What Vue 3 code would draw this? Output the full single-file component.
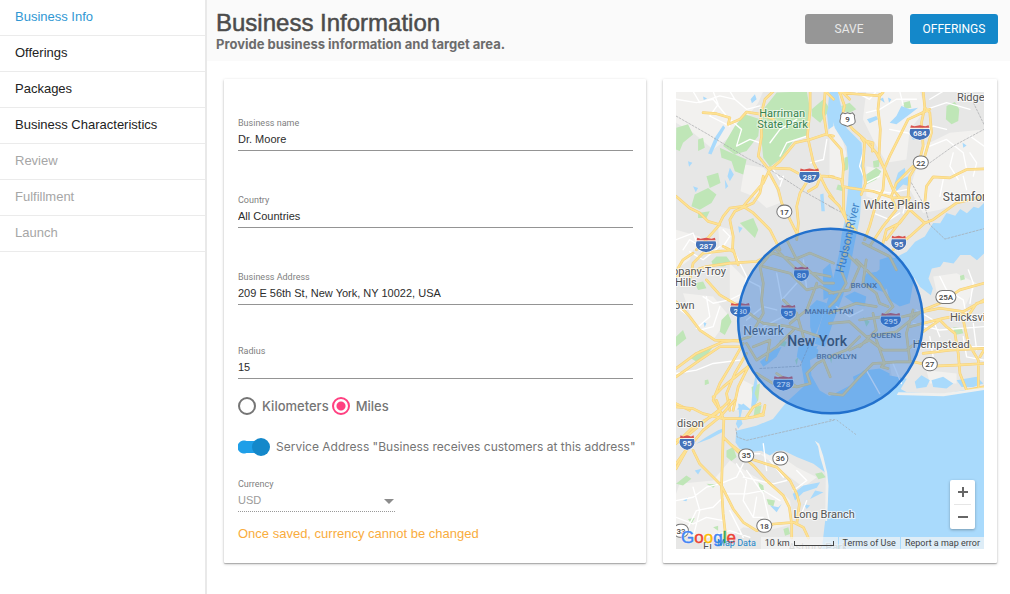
<script setup>
import { ref } from 'vue'

const steps = [
  { label: 'Business Info', state: 'current' },
  { label: 'Offerings', state: 'open' },
  { label: 'Packages', state: 'open' },
  { label: 'Business Characteristics', state: 'open' },
  { label: 'Review', state: 'locked' },
  { label: 'Fulfillment', state: 'locked' },
  { label: 'Launch', state: 'locked' },
]

const name = ref('Dr. Moore')
const country = ref('All Countries')
const address = ref('209 E 56th St, New York, NY 10022, USA')
const radius = ref('15')
const unit = ref('mi')
const serviceAddress = ref(true)

// Map sheets: each one covers a tile of the drawing and keeps its own origin.
const sheets = [
  {
    id: 'nw', origin: 'translate(-39 -36)',
    pale: 'M39 36H300L285 70 240 130 190 180 150 210 90 160 39 130ZM245 255L300 265 330 300 350 370 310 385 270 350 232 335ZM39 450L110 470 150 510H39ZM165 440L210 450 205 510H170Z',
    park: 'M300 90L340 40 430 36 440 90 430 170 390 185 350 240 320 262 300 235 293 170ZM215 140L245 105 290 120 285 170 250 215 215 225 180 200ZM40 145L75 135 90 165 60 190 50 215 39 210ZM105 180L120 175 125 205 105 215ZM170 205L215 225 250 240 240 285 215 275 205 245 175 235ZM130 290L165 280 172 310 140 325ZM95 345L135 325 160 345 145 370 110 390 85 380ZM105 400L140 395 130 415 105 415ZM230 430L270 415 285 450 275 475 250 450ZM445 90L480 60 500 90 470 130 445 110Z',
    lake: 'M180 138L186 145 165 180 145 225 135 222 155 175ZM262 60L275 45 280 60 266 72ZM120 52L132 58 122 62ZM75 245L88 250 78 262ZM200 265L212 285 200 305 193 290ZM470 345L480 342 484 395 474 395ZM185 300L195 320 187 328ZM225 440L238 445 228 460ZM290 230L297 240 290 248ZM90 320L105 325 98 338ZM500 60L510 50V140L495 150 490 100Z',
    minor: 'M39 60L100 70 150 60 190 110M90 36L110 70 170 50 215 60 250 90 290 80M150 36L165 75 140 110 200 140M215 60L200 36M200 120L235 150 220 200 260 180 290 190M320 190L350 150 400 120M350 230L370 190 430 170M490 180L480 240 440 250M330 270L350 300 360 290 350 320M39 480L90 460 110 510M60 510L80 480 130 510M180 450L200 470 180 500',
    major: 'M330 36L305 60 292 110 295 170 285 230 318 272 300 310 265 350 240 380 200 385 180 410 165 440 130 480 100 510M120 100L160 103 200 115 195 135 230 120 250 98 295 105 330 120M318 272L350 245 395 190 440 180 485 165 510 170M318 265L380 268 420 290 480 290 510 292M440 36L440 90 432 170 450 250 470 290 490 330 510 360M435 300L410 340 400 380 405 430 400 480M470 295L460 320 435 335M318 280L345 330 355 370 400 460M39 350L80 385 110 400 135 425 170 435M240 380L270 400 320 450 350 510M300 290L290 340 270 370 215 395 200 420 210 470 208 510M485 36L480 100 490 165M490 40L510 60',
    rail: 'M39 110L135 165 250 235 320 270 420 335 510 385',
  },
  {
    id: 'ne', origin: 'translate(459 -36)',
    pale: 'M110 36H270L290 90 240 150 230 240 170 250 130 180 100 120ZM280 200L360 160 462 150V340L330 390 280 400 240 330ZM110 260L160 270 200 330 190 380 110 350ZM0 120L30 150 50 220 45 300 0 290Z',
    park: 'M350 80L375 68 388 90 385 125 365 135 348 120ZM35 80L60 70 80 90 60 100 38 95ZM220 70L240 65 245 85 225 88ZM45 235L58 230 55 270 42 275ZM110 285L140 265 155 275 140 300 110 315ZM130 245L150 240 148 262 132 265ZM25 315L45 320 40 335 20 330Z',
    lake: 'M112 120L140 110 145 120 120 132ZM175 55L185 60 178 70ZM215 80L240 90 265 85 240 105 200 135 180 130 200 110ZM195 310L205 280 225 265 228 280 215 300 235 290 240 320 220 315 200 335ZM398 190L410 198 400 205ZM245 175L258 178 250 182ZM150 60L160 55 165 70Z',
    minor: 'M110 100L150 90 200 60 260 60M80 40L120 60 140 36M180 150L230 160 270 170 310 140 350 150M300 200L350 180 400 220 410 270 380 290M370 220L360 260 385 300M420 220L440 250 430 290M290 90L350 70 420 90M110 180L90 260 110 310 150 290M120 330L180 340 230 330M240 330L220 400M340 300L330 350M400 290L410 330M420 170L462 200M210 36L220 75M300 60L340 36M130 400L180 420 210 400',
    major: 'M30 36L45 80 38 110 70 150 110 185 140 220 165 270 190 330 240 390 285 430M60 60L40 40M30 40L90 45 150 50 160 40M150 45L145 90 152 150 148 230 165 270 160 330 140 370 120 440 105 480M95 175L105 190 100 260 108 310 95 345M110 185L130 190 128 215M280 36L285 85 275 130 280 200 270 240 240 290 235 350 240 390 200 440 170 480M300 90L235 120 210 170 180 230 165 265M285 85L300 100 305 160 285 230M250 260L200 310 185 350 200 390 160 440 120 500M0 170L35 210 42 260 38 320 60 325 130 335 190 355 240 355M0 290L35 300 42 330 42 390 60 460 50 510M0 350L30 380 50 420 80 455M462 268L410 270 360 295 310 292 290 320 285 370M240 390L210 430 170 450 160 490M462 350L380 370 310 420 285 430 240 470 190 510',
    rail: 'M300 250L370 200 462 150M245 310L285 380 300 435 345 478 462 447M430 70L462 135M0 380L60 410',
  },
  {
    id: 'w', origin: 'translate(-39 444)',
    pale: 'M39 0H100L80 60 39 90ZM60 160L150 170 200 230 150 300 90 250ZM240 420L280 440 260 510H200ZM200 70L250 120 240 180 200 190Z',
    park: 'M145 65L160 50 190 50 205 70 180 80 150 78ZM95 130L120 125 130 145 105 150ZM175 240L195 220 205 245 185 285 170 275ZM39 290L60 270 70 295 39 320ZM85 355L110 330 150 320 135 340 100 365ZM125 420L135 418 138 430 125 435ZM265 440L290 430 285 480 270 500ZM395 360L405 350 400 375ZM350 300L370 305 365 320 345 315Z',
    lake: 'M120 245L130 250 125 262ZM440 200L460 180 490 190 470 250 450 300 440 260ZM330 330L355 320 340 350 315 370 300 380 290 365ZM405 320L440 310 465 330 460 350 420 370 400 350ZM478 90L500 70 510 120 500 170 480 180ZM220 508L240 490 265 510ZM278 400L282 430 274 460 282 480 270 505 264 498 268 450Z',
    minor: 'M210 30L250 110 240 160 200 180 150 190 120 170M39 200L80 230 110 270 150 260 170 200M39 400L100 390 150 370 230 360M80 36L120 60 170 20M250 120L290 140 300 200M340 100L355 180 400 130M130 170L140 230 100 265M420 60L430 150M250 240L300 200 340 210M300 260L360 230',
    major: 'M39 185L80 230 110 270 155 300 230 303M39 385L100 340 180 305 230 300 260 290 300 220 295 180 300 130 290 80 340 20M39 410L110 360 170 320 235 320M39 110L130 80 200 70 280 65 330 40 390 60 440 40 510 70M80 120L90 70 120 40 210 30 225 75M130 120L170 165 230 200 300 250 380 260 470 290M39 95L60 60 90 40M180 20L210 35M240 310L200 380 170 430 150 480 170 510M250 340L215 400 190 460 200 510M255 380L225 440 210 510M260 375L180 440 150 470M39 490L80 510M300 80L380 100 430 150 470 140 510 160M340 30L400 90 500 110M370 0L400 60 480 130 510 130M390 270L340 320 280 360 250 310M270 320L320 300 310 360M340 400L400 440 440 430 430 400 460 370 480 360 500 410M420 290L400 220 360 180M280 400L330 430 400 440M460 130L430 210 380 250',
    rail: 'M290 385L410 378 435 320',
  },
  {
    id: 'e', origin: 'translate(459 444)',
    pale: 'M310 110L380 100 440 130 400 210 330 200ZM180 370L240 370 210 440 190 430ZM290 390L380 400 380 430 300 430Z',
    park: 'M390 108L402 105 405 118 392 122ZM370 262L395 265 400 280 375 285ZM150 80L170 70 175 110 155 120ZM100 230L120 245 110 260ZM0 350L10 345 5 370ZM380 465L462 450 430 462 395 474ZM40 60L60 50 55 80Z',
    lake: 'M150 60L180 50 235 70 255 100 240 190 210 200 180 180 170 140 150 110ZM45 170L75 155 110 170 105 200 80 195ZM70 410L110 390 150 385 180 400 175 440 130 455 80 450ZM255 425L275 405 300 420 290 440 260 445ZM305 420L340 410 370 430 350 445 310 440ZM380 420L410 415 440 410 460 430 430 440 395 440Z',
    minor: 'M330 110L350 150 400 180 410 230M420 190L430 130 415 90M250 250L330 270 462 260M260 210L310 240 330 290M300 290L310 350M400 290L410 350 462 360M430 250L440 330M190 370L215 430M280 320L462 320M110 390L150 460M20 200L60 230 100 210',
    major: 'M0 460L40 465 90 410 130 370 200 365 250 365 310 378 380 375 462 370M0 250L60 245 110 290 200 275 280 210 330 190 390 150 462 130M180 240L280 215 330 205 400 215 462 180M240 260L340 235 420 220 440 190 462 185M280 275L330 240 350 260 375 280 385 340 390 400 410 450 462 440M280 340L360 330 462 325M400 240L415 310 445 360 445 440M60 0L30 80 50 130 20 180 0 200M80 60L150 130 190 200 160 230 90 240M50 40L90 80 60 150 0 160M0 220L80 190 140 200M110 60L100 130 140 160 150 190 175 200M60 330L120 300 160 330 230 330 270 300M90 320L140 270 130 220M140 300L165 370 155 380 175 385M0 350L50 330 90 290M250 210L230 280 240 360M100 10L180 50 200 90M462 330L450 350',
    rail: '',
  },
  {
    id: 'sw', origin: 'translate(-39 924)',
    pale: 'M50 250L150 240 200 180 260 220 350 270 380 300 390 370 310 390 240 380 200 410H39V280ZM290 160L350 165 400 200 460 230 420 260 380 230Z',
    park: 'M39 250L70 225 85 235 60 255ZM130 250L160 252 150 262ZM190 150L210 140 220 170 205 182 190 170ZM285 245L300 255 303 275 290 268ZM310 295L335 300 330 318 315 312ZM75 355L95 352 85 370ZM455 220L475 215 487 230 465 236ZM275 20L295 15 290 40 270 55ZM150 380L165 375 165 390ZM360 385L375 380 380 400 365 405Z',
    lake: 'M130 110L165 90 178 85 178 95 140 115 100 130ZM225 10L240 15 232 50 238 70 225 85 218 70 228 45ZM388 280L420 255 470 245 460 262 420 275 395 300ZM455 270L480 275 440 295ZM320 315L345 320 355 310 340 335ZM420 310L440 315 430 325ZM95 210L115 205 105 222ZM60 300L75 290 70 302Z',
    minor: 'M39 300L90 290 130 260 170 250 220 230 240 190M60 410L100 330 150 320 180 290M39 350L90 370 130 350 180 360M90 260L110 330 90 410M220 190L250 240 240 300 270 350M250 210L300 280 320 370M240 230L330 250 370 240M190 280L250 280 300 270 350 300M280 290L270 350 300 350M200 330L240 410M400 210L430 240 390 270M320 180L360 230M300 130L310 210M130 410L200 390 260 410M410 350L430 300M260 160L290 160',
    major: 'M39 20L90 25 120 40 180 55 240 55 300 45M160 0L182 60 180 110 175 260 180 340 188 410M90 150L110 190 150 230 175 255 210 325 240 365 280 390 330 370 390 365 420 380 435 412M180 110L220 150 270 195 310 240 360 285 378 320 385 370 385 412M200 130L260 175 340 200 380 240 400 280 408 310 400 370M39 130L90 80 160 40 200 0M39 205L70 150 120 90 170 50 215 0M39 190L75 140M39 120L80 100 140 50 180 20M250 50L270 20 290 10M270 50L300 40 305 15',
    rail: 'M218 85L222 110 250 120 510 60',
  },
]

const interstates = [
  { n: '684', x: 243, y: 41 }, { n: '287', x: 133, y: 84 }, { n: '287', x: 30, y: 153 },
  { n: '95', x: 222, y: 151 }, { n: '80', x: 125, y: 182 }, { n: '95', x: 112, y: 220 },
  { n: '280', x: 64, y: 218 }, { n: '295', x: 214, y: 228 }, { n: '278', x: 107, y: 291 },
  { n: '95', x: 11, y: 350 },
]
const routes = [
  { n: '17', x: 108, y: 120 }, { n: '22', x: 244, y: 71 }, { n: '25A', x: 269, y: 205 },
  { n: '27', x: 253, y: 272 }, { n: '35', x: 70, y: 363 }, { n: '36', x: 104, y: 366 },
  { n: '18', x: 88, y: 433 }, { n: '33', x: 5, y: 438 },
]
const places = [
  { t: 'Ridge', x: 280, y: 10, c: 'town' }, { t: 'Stamfor', x: 266, y: 109, c: 'town big' },
  { t: 'White Plains', x: 187, y: 117, c: 'town big' }, { t: 'opany-Troy', x: -4, y: 183, c: 'town' },
  { t: 'Hills', x: -1, y: 194, c: 'town' }, { t: 'own', x: -2, y: 217, c: 'town' },
  { t: 'Newark', x: 67, y: 243, c: 'town big' }, { t: 'New York', x: 111, y: 254, c: 'city' },
  { t: 'Hicksvi', x: 273, y: 229, c: 'town' }, { t: 'Hempstead', x: 236, y: 256, c: 'town' },
  { t: 'MANHATTAN', x: 128, y: 222, c: 'district' }, { t: 'BRONX', x: 174, y: 196, c: 'district' },
  { t: 'QUEENS', x: 194, y: 246, c: 'district' }, { t: 'BROOKLYN', x: 140, y: 267, c: 'district' },
  { t: 'dison', x: 1, y: 335, c: 'town' }, { t: 'Long Branch', x: 117, y: 425, c: 'town' },
  { t: 'Harriman', x: 83, y: 26, c: 'green' }, { t: 'State Park', x: 81, y: 37, c: 'green' },
  { t: 'Fi', x: 27, y: 457, c: 'town' }, { t: 'Asbury Park', x: 112, y: 458, c: 'town faint' },
]
</script>

<template>
  <div class="page">
    <nav class="steps" aria-label="Setup steps">
      <a
        v-for="s in steps"
        :key="s.label"
        href="#"
        :class="['step', s.state]"
        :aria-current="s.state === 'current' ? 'step' : null"
        :aria-disabled="s.state === 'locked' ? 'true' : null"
      >{{ s.label }}</a>
    </nav>

    <main class="main">
      <header class="head">
        <div class="titles">
          <h1>Business Information</h1>
          <p>Provide business information and target area.</p>
        </div>
        <div class="actions">
          <button type="button" class="btn save">SAVE</button>
          <button type="button" class="btn next">OFFERINGS</button>
        </div>
      </header>

      <div class="content">
        <form class="card form" @submit.prevent>
          <div class="fields">
            <div class="field">
              <label for="name">Business name</label>
              <input id="name" v-model="name" type="text">
            </div>
            <div class="field">
              <label for="country">Country</label>
              <input id="country" v-model="country" type="text">
            </div>
            <div class="field">
              <label for="address">Business Address</label>
              <input id="address" v-model="address" type="text">
            </div>
          </div>
          <div class="field radius">
            <label for="radius">Radius</label>
            <input id="radius" v-model="radius" type="text">
          </div>

          <div class="units" role="radiogroup" aria-label="Radius unit">
            <label class="unit"><input v-model="unit" type="radio" name="unit" value="km">Kilometers</label>
            <label class="unit"><input v-model="unit" type="radio" name="unit" value="mi">Miles</label>
          </div>

          <label class="toggle">
            <input v-model="serviceAddress" type="checkbox" role="switch">
            <span>Service Address "Business receives customers at this address"</span>
          </label>

          <div class="field currency">
            <label for="currency">Currency</label>
            <div class="pick">
              <select id="currency" disabled>
                <option>USD</option>
              </select>
              <svg width="10" height="5" viewBox="0 0 10 5" aria-hidden="true"><path d="M0 0H10L5 5Z" fill="#8c8c8c" /></svg>
            </div>
          </div>
          <p class="note">Once saved, currency cannot be changed</p>
        </form>

        <section class="card mapcard" aria-label="Target area">
          <div class="map">
            <svg class="canvas" viewBox="0 0 307 457" preserveAspectRatio="xMidYMid slice" role="img" aria-label="Map of New York with a 15 mile radius">
              <defs>
                <path id="interstate" d="M-7 -3.5C-8 0 -7.500 3 -5 5 -3 6.500 -1.500 7 0 7.500 1.500 7 3 6.500 5 5 7.500 3 8 0 7 -3.500Z" />
              </defs>
              <rect width="307" height="457" fill="#e7e7e6" />
              <g transform="scale(.33333)">
                <g v-for="s in sheets" :key="s.id" :transform="s.origin">
                  <path :d="s.pale" fill="#f2f1ef" />
                  <path :d="s.park" fill="#bfe6b7" />
                </g>
                <g fill="#a9dafc">
                  <path d="M459 0L455 40 475 110 510 165 517 235 513 305 505 385 495 430 489 480 475 540 455 620 430 700 415 755 445 765 470 690 500 610 520 530 535 450 550 380 555 300 560 230 555 155 510 110 490 30 484 0Z" />
                  <path d="M921 334L905 350 890 345 870 365 850 352 835 372 809 364 790 395 769 394 744 434 715 450 690 480 650 500 600 540 570 545 555 570 590 590 620 600 640 580 690 560 705 545 730 585 762 610 768 590 755 560 765 530 790 525 800 510 830 515 850 490 880 490 900 505 921 485Z" />
                  <path d="M180 1015L178 1050 190 1068 221 1079 255 1075 281 1089 300 1076 321 1074 361 1094 411 1114 451 1144 453 1224 446 1284 436 1371H921V885L870 892 800 905 690 900 672 890 690 860 640 850 560 835 520 880 459 912 430 895 405 850 400 800 425 760 385 770 375 820 385 880 330 930 290 980 240 1000Z" />
                </g>
                <g v-for="s in sheets" :key="s.id" :transform="s.origin" fill="none" stroke-linejoin="round" stroke-linecap="round">
                  <path :d="s.lake" fill="#a9dafc" />
                  <path :d="s.minor" stroke="#fff" stroke-width="4" />
                  <path :d="s.rail" stroke="#a5a7aa" stroke-width="2" stroke-dasharray="6 5" />
                  <path :d="s.major" stroke="#f6cf78" stroke-width="8" />
                  <path :d="s.major" stroke="#fde293" stroke-width="5" />
                </g>
                <path d="M415 1045L428 1054 440 1090 452 1140 456 1180 452 1285 446 1284 448 1150 430 1090 425 1062Z" fill="#f0f0ee" />
                <path d="M665 900L800 903 921 886V893L800 912 660 908Z" fill="#f0f0ee" />
                <path d="M459 982L479 982 540 1028" fill="none" stroke="#a5a7aa" stroke-width="2" stroke-dasharray="6 5" />
              </g>

              <text v-for="p in places" :key="p.t" :class="p.c" :x="p.x" :y="p.y">{{ p.t }}</text>
              <text class="river" text-anchor="middle" transform="translate(175 147) rotate(-77)">Hudson River</text>

              <g v-for="(s, i) in interstates" :key="i" :transform="`translate(${s.x} ${s.y})`">
                <g :transform="s.n.length > 2 ? 'scale(1.35 1)' : ''">
                  <use href="#interstate" fill="#fff" stroke="#fff" stroke-width="1" />
                  <use href="#interstate" fill="#4472b8" />
                  <path d="M-7 -4.500L-6.500 -7 -4 -6 0 -7 4 -6 6.500 -7 7 -4.500Z" fill="#d9534f" />
                </g>
                <text class="shield light" y="4">{{ s.n }}</text>
              </g>
              <g v-for="r in routes" :key="r.n" :transform="`translate(${r.x} ${r.y})`">
                <rect v-if="r.n.length > 2" x="-10" y="-6.500" width="20" height="13" rx="6.500" class="oval" />
                <rect v-else x="-7.500" y="-6.500" width="15" height="13" rx="6.500" class="oval" />
                <text class="shield" y="3">{{ r.n }}</text>
              </g>
              <g transform="translate(171 28)">
                <path class="oval" d="M-7 -4L-5 -6.500 -2.500 -5.500 0 -6.500 2.500 -5.500 5 -6.500 7 -4C6 -2 8 0 7.500 3 6 6 3 5 0 7 -3 5 -6 6 -7.500 3 -8 0 -6 -2 -7 -4Z" />
                <text class="shield" y="3">9</text>
              </g>

              <circle cx="154" cy="229" r="92" fill="#2070d8" fill-opacity=".4" stroke="#2271cd" stroke-width="2.500" />
            </svg>

            <div class="google" aria-label="Google">
              <span class="b">G</span><span class="r">o</span><span class="y">o</span><span class="b">g</span><span class="g">l</span><span class="r">e</span>
            </div>
            <div class="zoom">
              <button type="button" aria-label="Zoom in"><svg width="10" height="10" viewBox="0 0 10 10"><path d="M5 0V10M0 5H10" stroke="#666" stroke-width="2" /></svg></button>
              <button type="button" aria-label="Zoom out"><svg width="10" height="10" viewBox="0 0 10 10"><path d="M0 5H10" stroke="#666" stroke-width="2" /></svg></button>
            </div>
            <div class="credits">
              <a href="#" class="data">Map Data</a>
              <span class="scale">10 km<i></i></span>
              <a href="#">Terms of Use</a>
              <a href="#">Report a map error</a>
            </div>
          </div>
        </section>
      </div>
    </main>
  </div>
</template>

<style>
body {
  background: #fff;
}
</style>

<style scoped>
.page {
  display: flex;
  min-height: 100vh;
  background: #fff;
  font-family: "Liberation Sans", Arial, sans-serif;
  box-sizing: border-box;
}
.page * {
  box-sizing: border-box;
}
.steps {
  flex: 0 0 207px;
  border-right: 2px solid #e9e9e9;
}
.step {
  display: block;
  height: 36px;
  padding: 0 15px;
  border-bottom: 1px solid #ebebeb;
  font-size: 13px;
  line-height: 34px;
  color: #222;
  text-decoration: none;
}
.step.current {
  color: #3097d3;
}
.step.locked {
  color: #a6a6a6;
}
.main {
  flex: 1;
  min-width: 0;
}
.head {
  display: flex;
  justify-content: space-between;
  align-items: flex-start;
  padding: 9px 12px 9px 9px;
  background: #fafafa;
}
h1 {
  margin: 0;
  font-size: 24px;
  line-height: 27px;
  font-weight: 400;
  color: #4c4c4c;
  -webkit-text-stroke: 0.5px #4c4c4c;
}
.titles p {
  margin: 0;
  font: 700 13px/16px Inter, sans-serif;
  color: #6c6c6c;
}
.actions {
  display: flex;
  gap: 17px;
  padding-top: 5px;
}
.btn {
  width: 88px;
  height: 30px;
  padding: 0;
  border: 0;
  border-radius: 3px;
  font: 400 12px/30px Roboto, sans-serif;
  color: #fff;
}
.btn.save {
  background: #969696;
  color: #e8e8e8;
}
.btn.next {
  background: #1488ca;
}
.content {
  display: grid;
  grid-template-columns: 422fr 334fr;
  gap: 17px;
  padding: 18px 13px 18px 17px;
}
.card {
  min-width: 0;
  background: #fff;
  border-radius: 1px;
  box-shadow: 0 1px 3px rgba(0, 0, 0, 0.25), 0 1px 1px rgba(0, 0, 0, 0.2);
}
.form {
  padding: 38px 13px 20px 14px;
}
.fields {
  display: grid;
  gap: 43px;
}
.field label {
  display: block;
  font: 400 9px/12px Roboto, sans-serif;
  color: #808080;
}
.field input,
.field select {
  display: block;
  width: 100%;
  height: 22px;
  padding: 0 0 2px;
  border: 0;
  border-bottom: 1px solid #949494;
  border-radius: 0;
  outline: 0;
  background: transparent;
  font: 400 11px/18px "Liberation Sans", Arial, sans-serif;
  color: #2c2c2c;
}
.radius {
  margin-top: 40px;
}
.units {
  display: flex;
  gap: 3px;
  margin-top: 16px;
}
.unit {
  display: flex;
  align-items: center;
  gap: 6px;
  font: 500 13px/22px Inter, sans-serif;
  color: #757575;
}
.unit input {
  appearance: none;
  width: 18px;
  height: 18px;
  margin: 0;
  border: 2px solid #757575;
  border-radius: 50%;
}
.unit input:checked {
  border-color: #ff4081;
  background: radial-gradient(circle, #ff4081 4px, transparent 5px);
}
.toggle {
  display: flex;
  align-items: center;
  gap: 6px;
  margin-top: 19px;
  font: 400 12px/22px Inter, sans-serif;
  color: #757575;
  white-space: nowrap;
}
.toggle input {
  appearance: none;
  display: flex;
  align-items: center;
  flex: 0 0 32px;
  height: 18px;
  margin: 0;
  background:
    radial-gradient(circle at 6px 9px, #1f9fe8 6px, transparent 7px),
    linear-gradient(#1f9fe8, #1f9fe8) 6px center / 20px 12px no-repeat;
}
.toggle input::before {
  content: "";
  width: 18px;
  height: 18px;
  border-radius: 50%;
  background: #aaa;
}
.toggle input:checked::before {
  margin-left: auto;
  background: #1488ca;
}
.currency {
  width: 157px;
  margin-top: 20px;
}
.pick {
  display: grid;
  align-items: center;
}
.pick > * {
  grid-area: 1 / 1;
}
.pick svg {
  justify-self: end;
  margin-right: 1px;
}
.field select {
  appearance: none;
  border-bottom: 1px dotted #999;
  color: #9b9b9b;
  opacity: 1;
}
.note {
  margin: 13px 0 0;
  font-size: 13px;
  line-height: 18px;
  color: #f9ac3d;
}
.mapcard {
  padding: 13px;
}
.map {
  position: relative;
  height: 457px;
  overflow: hidden;
  font: 400 9px/12px Roboto, sans-serif;
}
.canvas {
  display: block;
  width: 100%;
  height: 100%;
}
.canvas text {
  font-family: Roboto, sans-serif;
  paint-order: stroke;
}
.town {
  font-size: 11px;
  fill: #555;
  stroke: rgba(255, 255, 255, 0.7);
  stroke-width: 2px;
}
.town.big {
  font-size: 12px;
}
.town.faint {
  opacity: 0.5;
}
.city {
  font-size: 14px;
  font-weight: 500;
  fill: #444;
}
.district {
  font-size: 8px;
  font-weight: 500;
  fill: #68727f;
}
.green {
  font-size: 11px;
  fill: #37824f;
  stroke: rgba(255, 255, 255, 0.6);
  stroke-width: 2px;
}
.river {
  font-size: 12px;
  fill: #4285c8;
}
.shield {
  font-size: 8px;
  font-weight: 500;
  text-anchor: middle;
  fill: #444;
}
.shield.light {
  fill: #fff;
}
.oval {
  fill: #fff;
  stroke: #777;
  stroke-width: 1px;
}
.google {
  position: absolute;
  left: 5px;
  bottom: 1px;
  display: flex;
  font: 400 17px/20px "Liberation Sans", Arial, sans-serif;
  text-shadow: 0 0 2px #fff, 0 0 1px #fff;
  -webkit-text-stroke: 0.5px currentColor;
}
.b { color: #4285f4; }
.r { color: #ea4335; }
.y { color: #fbbc05; }
.g { color: #34a853; }
.zoom {
  position: absolute;
  right: 9px;
  bottom: 20px;
  width: 25px;
  padding: 0 4px;
  border-radius: 2px;
  background: #fff;
  box-shadow: 0 1px 3px rgba(0, 0, 0, 0.3);
}
.zoom button {
  display: grid;
  place-items: center;
  width: 100%;
  height: 24px;
  padding: 0;
  border: 0;
  background: none;
}
.zoom button + button {
  height: 25px;
  border-top: 1px solid #e6e6e6;
}
.credits {
  position: absolute;
  right: 0;
  bottom: 0;
  display: flex;
  gap: 1px;
  white-space: nowrap;
}
.credits > * {
  padding: 0 4px;
  background: rgba(245, 245, 245, 0.7);
  color: #444;
  text-decoration: none;
}
.credits .data {
  background: none;
  color: #1a85c9;
}
.scale {
  display: flex;
  align-items: center;
  gap: 4px;
}
.scale i {
  width: 40px;
  height: 5px;
  border: solid #444;
  border-width: 0 1px 1px;
}
</style>
